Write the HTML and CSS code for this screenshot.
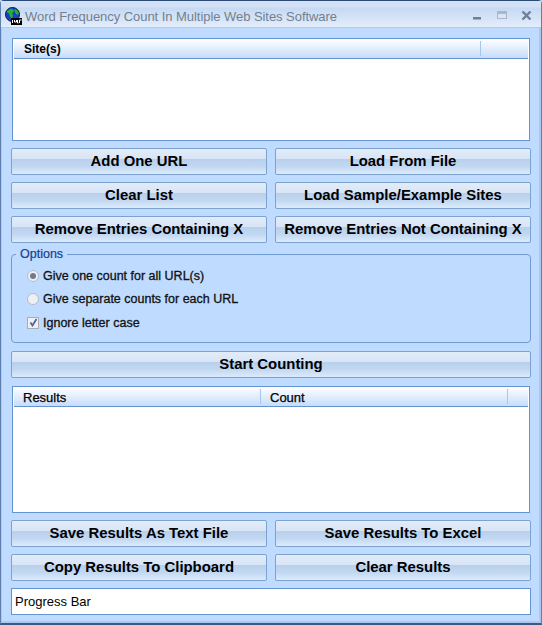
FILE: index.html
```html
<!DOCTYPE html>
<html lang="en">
<head>
<meta charset="utf-8">
<title>Word Frequency Count In Multiple Web Sites Software</title>
<link rel="stylesheet" href="styles.css">
</head>
<body>
<div class="window">
  <header class="titlebar">
    <svg class="appicon" width="17" height="18" viewBox="0 0 17 18">
      <circle cx="7.500" cy="7.500" r="7" fill="#1a3fc4" stroke="#101030" stroke-width="1"/>
      <path d="M2 4l4-2.500 2 1 1 2-2 2 1 2-1 3-2-2-1-3-2-1z" fill="#1fb52f"/>
      <path d="M9 2l3 1 2 3-1 2-2-1-1-2z" fill="#1fb52f"/>
      <rect x="6" y="11" width="11" height="7" fill="#000"/>
      <path d="M7.500 13v3M9.500 13v2h2v-2M12.500 13v3h1M14.500 13v3M14.500 13h2" stroke="#fff" stroke-width="1" fill="none"/>
    </svg>
    <span class="title">Word Frequency Count In Multiple Web Sites Software</span>
    <div class="controls">
      <svg class="ctl-min" width="8" height="3" viewBox="0 0 8 3"><rect width="8" height="2.500" fill="#6d7f9c"/></svg>
      <svg class="ctl-max" width="10" height="8" viewBox="0 0 10 8"><rect x=".5" y=".5" width="9" height="7" fill="#dbe6f5" stroke="#a9b7cb"/><rect x="1" y="1" width="8" height="2" fill="#a9b7cb"/></svg>
      <svg class="ctl-close" width="11" height="9" viewBox="0 0 11 9"><path d="M1.500 .5l8 8M9.500 .5l-8 8" stroke="#6d7f9c" stroke-width="2.400"/></svg>
    </div>
  </header>
  <main class="content">
    <section class="list list-sites">
      <div class="list-head head-sites">
        <div class="col col-site">Site(s)</div>
        <div class="col col-rest"></div>
      </div>
    </section>
    <div class="btn-grid">
      <button class="btn">Add One URL</button>
      <button class="btn">Load From File</button>
      <button class="btn">Clear List</button>
      <button class="btn">Load Sample/Example Sites</button>
      <button class="btn">Remove Entries Containing X</button>
      <button class="btn">Remove Entries Not Containing X</button>
    </div>
    <fieldset class="options">
      <legend>Options</legend>
      <label class="opt"><span class="radio checked"></span>Give one count for all URL(s)</label>
      <label class="opt"><span class="radio"></span>Give separate counts for each URL</label>
      <label class="opt"><span class="check"><svg width="9" height="9" viewBox="0 0 9 9"><path d="M1.500 4.500l2 3 4-6.500" fill="none" stroke="#51679a" stroke-width="1.800"/></svg></span>Ignore letter case</label>
    </fieldset>
    <button class="btn btn-wide">Start Counting</button>
    <section class="list list-results">
      <div class="list-head head-results">
        <div class="col col-results">Results</div>
        <div class="col col-count">Count</div>
        <div class="col col-rest"></div>
      </div>
    </section>
    <div class="btn-grid">
      <button class="btn">Save Results As Text File</button>
      <button class="btn">Save Results To Excel</button>
      <button class="btn">Copy Results To Clipboard</button>
      <button class="btn">Clear Results</button>
    </div>
    <div class="progress">Progress Bar</div>
  </main>
</div>
</body>
</html>
```
FILE: styles.css
```css
* { box-sizing: border-box; }
html, body { margin: 0; padding: 0; }
body { width: 542px; height: 625px; overflow: hidden; font-family: "Liberation Sans", Arial, sans-serif; background: #bfdbff; }
.window { width: 542px; height: 625px; display: flex; flex-direction: column; background: #bfdbff; border: 1px solid #5f80ad; border-top-color: #2c4a75; border-bottom: 2px solid #3b5a82; border-radius: 4px 4px 0 0; box-shadow: inset 1px 0 0 #a9c9f2, inset -2px 0 0 #a9c9f2, inset 0 -2px 0 #a9c9f2; }
.titlebar { height: 27px; flex: none; display: flex; align-items: center; padding: 4px 0 0 4px; background: linear-gradient(#d2e1f5 0, #d2e1f5 6px, #c6d9f3 7px, #e3edfb 100%); border-bottom: 1px solid #a9cdf5; }
.appicon { flex: none; margin-top: -1px; }
.title { margin-left: 3px; font-size: 13px; color: #727f8f; letter-spacing: -.05px; white-space: nowrap; flex: 1; }
.controls { display: flex; align-items: center; padding-right: 9px; margin-top: -2px; }
.ctl-min { margin-top: 6px; margin-right: 16px; }
.ctl-max { margin-right: 14px; }
.content { flex: 1; display: flex; flex-direction: column; padding: 10px 10px 0; }
.list { margin: 0 1px; padding: 0 1px; border: 1px solid #6593cf; background: #fff; }
.list-sites { height: 103px; }
.list-results { height: 127px; margin-top: 8px; }
.list-head { height: 20px; display: flex; align-items: center; background: linear-gradient(#fff, #c6dcfb); border-bottom: 1px solid #6593cf; color: #000; }
.head-sites { font-size: 12px; font-weight: bold; }
.head-results { font-size: 13px; -webkit-text-stroke: .25px #000; }
.col { height: 15px; line-height: 17px; padding-left: 10px; border-right: 1px solid #a5c6f0; }
.col-site { width: 467px; }
.col-results { width: 247px; padding-left: 9px; }
.col-count { width: 247px; padding-left: 9px; }
.col-rest { flex: 1; border-right: 0; padding: 0; }
.btn-grid { display: grid; grid-template-columns: 256px 256px; column-gap: 8px; row-gap: 7px; margin-top: 7px; }
.btn { height: 27px; padding: 0 0 2px; border: 1px solid #7da2ce; border-radius: 2px; background: linear-gradient(#e2ecf9 0, #d8e5f6 38%, #b9d0ec 42%, #c2d8f2 70%, #dcebfb 100%); font: bold 14.900px "Liberation Sans", Arial, sans-serif; color: #000; white-space: nowrap; }
.btn-wide { width: 520px; height: 27px; margin-top: 8px; flex: none; }
.options { margin: 4px 0 0; height: 96px; padding: 3px 0 0 15px; border: 1px solid #6f9bd2; border-radius: 4px; display: flex; flex-direction: column; }
.options legend { margin-left: -11px; padding: 0 4px; font-size: 12.500px; font-weight: normal; color: #15428b; line-height: 14px; -webkit-text-stroke: .2px #15428b; }
.opt { display: flex; align-items: center; height: 23.500px; font-size: 12.500px; color: #111; -webkit-text-stroke: .3px #111; }
.radio { width: 12px; height: 12px; margin-right: 4px; border-radius: 50%; border: 1px solid #b7bcc4; background: #eef0f3; display: flex; align-items: center; justify-content: center; }
.radio.checked::after { content: ""; width: 6px; height: 6px; border-radius: 50%; background: #6d7a8f; }
.check { width: 12px; height: 12px; margin-right: 4px; border: 1px solid #a8adb5; background: #eef0f3; display: flex; align-items: center; justify-content: center; }
.progress { width: 520px; height: 27px; margin-top: 7px; flex: none; border: 1px solid #6593cf; background: #fff; font-size: 13px; line-height: 25px; padding-left: 3px; color: #000; }
```
